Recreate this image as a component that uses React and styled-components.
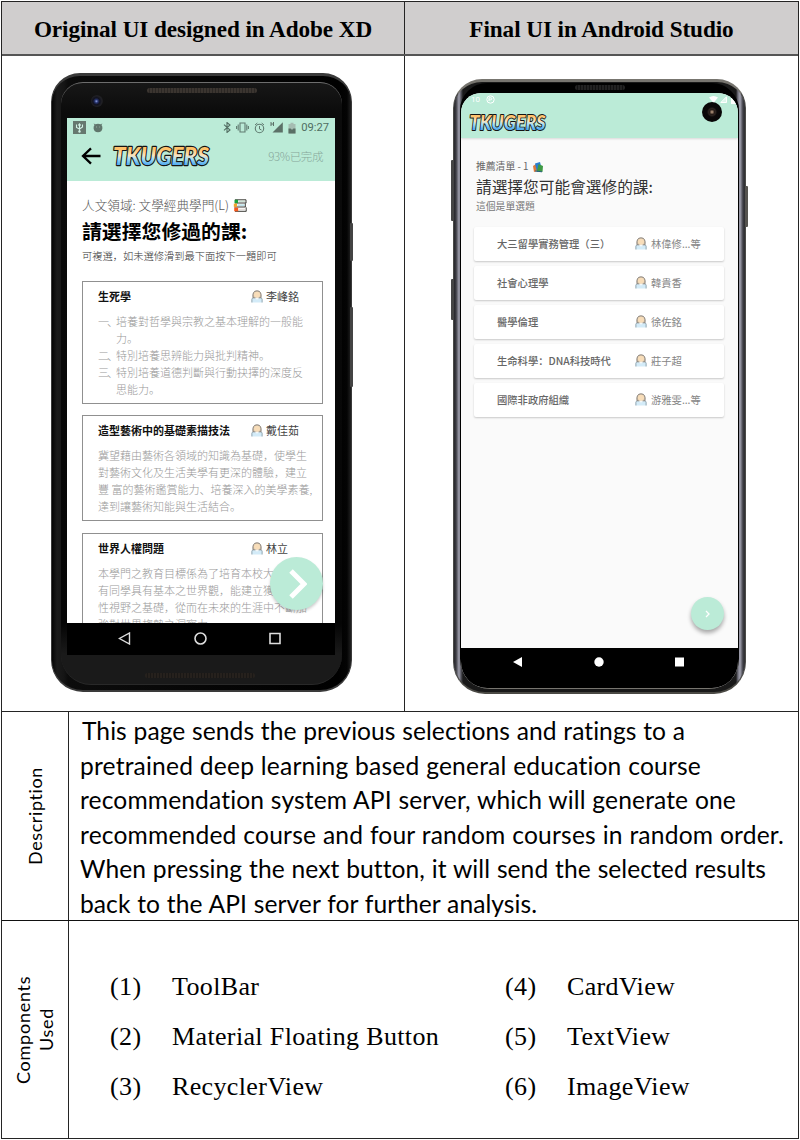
import React from "react";
import styled, { createGlobalStyle } from "styled-components";

const Global = createGlobalStyle`
  * { box-sizing: border-box; }
  html, body { margin: 0; background: #fff; }
  body { width: 800px; height: 1140px; overflow: hidden; }
`;
const cjk = `"Noto Sans CJK SC", "Noto Sans", sans-serif`;
const serif = `"Liberation Serif", serif`;
const line = "#242424";

const Page = styled.main`
  width: 798px; height: 1138px; margin: 1px; 
  display: grid; grid-template-rows: 54px 656px 208px 1fr;
  border: 1px solid ${line};
  color: #000; background: #fff;
`;
const HeaderRow = styled.header`
  display: grid; grid-template-columns: 402px 1fr;
  border-bottom: 2px solid #555; background: #d0cece;
`;
const HeaderCell = styled.h2`
  margin: 0; display: flex; justify-content: center; align-items: center;
  padding: 3px 0 0;
  font: bold 23.2px ${serif}; white-space: nowrap;
  letter-spacing: -0.08px;
  & + & { border-left: 1px solid ${line}; }
`;
const ShotRow = styled.section`
  display: grid; grid-template-columns: 402px 1fr;
  border-bottom: 1px solid ${line};
`;
const ShotCell = styled.div`
  padding: ${(p) => p.$pad};
  & + & { border-left: 1px solid ${line}; }
`;
const InfoRow = styled.section`
  display: grid; grid-template-columns: 66px 1fr;
  & + & { border-top: 1px solid #111; }
`;
const SideLabel = styled.div`
  display: flex; align-items: center; justify-content: center;
  writing-mode: vertical-rl; transform: rotate(180deg);
  font: 18px/23px Lato, sans-serif; text-align: center;
  font-variant-ligatures: none;
  letter-spacing: ${(p) => p.$ls}px;
`;
const InfoBody = styled.div`
  border-left: 1px solid ${line};
  padding: ${(p) => p.$pad};
`;
const Paragraph = styled.p`
  margin: 0; font: 24.6px/34.5px Lato, sans-serif; font-variant-ligatures: none;
`;
const Line = styled.span`
  display: block; width: ${(p) => p.$w}px; white-space: nowrap;
  margin-left: ${(p) => p.$ml || 0}px; letter-spacing: ${(p) => p.$ls || 0}px;
  text-align: justify; text-align-last: justify;
`;
const PartGrid = styled.ol`
  list-style: none; margin: 0; padding: 0;
  display: grid; grid-template-columns: 395px 1fr; grid-auto-flow: column;
  grid-template-rows: repeat(3, 50px);
  font: 26px/50px ${serif}; white-space: nowrap; letter-spacing: 0.36px;
`;
const Part = styled.li`
  display: grid; grid-template-columns: 62px 1fr;
`;

/* Left phone */
const Pixel = styled.div`
  position: relative; width: 301px; height: 619px; padding: 42px 16px 0 15px;
  border-radius: 29px 29px 32px 32px; border: solid #3a3a3a; border-width: 3px 1px 2px;
  background: linear-gradient(90deg, #050505 0, #1b1b1b 5px, #151515 12px, #0c0c0c 16px, #000 286px, #040404 295px, #292929 300px);
`;
const Bezel = styled.div`
  position: absolute; inset: 6px 9px 5px 9px; border-radius: 22px 22px 30px 30px;
  border-top: 1px solid #6d6d6d; border-bottom: 1px solid #292929;
  background: linear-gradient(#171717, #0b0b0b 30px, #050505 90%, #1a1a1a 95%);
`;
const Grille = styled.div`
  position: absolute; left: ${(p) => p.$x}px; top: ${(p) => p.$y}px;
  width: ${(p) => p.$w}px; height: 5px; border-radius: 3px;
  background: repeating-linear-gradient(90deg, ${(p) => p.$c} 0 2px, ${(p) => p.$gap || "#2b2724"} 2px 3px);
`;
const Camera = styled.div`
  position: absolute; left: 39px; top: 19px; width: 12px; height: 12px; border-radius: 50%;
  background: radial-gradient(circle at 45% 52%, #8fa0e0 0, #27346f 18%, #10111e 38%, #202024 60%, #111 100%);
`;
const Key = styled.i`
  position: absolute; left: ${(p) => p.$x}px; top: ${(p) => p.$y}px;
  width: ${(p) => p.$w || 3}px; height: ${(p) => p.$h}px; background: ${(p) => p.$c || "#444"}; border-radius: 1px;
`;
const PixelScreen = styled.div`
  position: relative; height: 537px; width: 268px; display: flex; flex-direction: column;
  background: #fff; overflow: hidden; font-family: ${cjk};
`;
const PixelTop = styled.div`
  height: 63px; flex: none; background: #bbebd7; display: flex; flex-direction: column;
`;
const StatusBar = styled.div`
  height: 18px; display: flex; align-items: center; justify-content: space-between; padding: 1px 6px 0 6px;
  font: 400 11.2px Roboto, sans-serif; color: #4f6d61;
`;
const StatusIcons = styled.span`
  display: flex; align-items: center; gap: ${(p) => p.$gap || 6}px;
  svg { display: block; }
`;
const AppBar = styled.div`
  flex: 1; display: flex; align-items: center; padding: 0 12px 5px 14px;
  svg { display: block; }
`;
const AppLogo = styled.div`
  margin: -8px 0 -8px 9px;
`;
const Progress = styled.span`
  margin-left: auto; font-weight: 300; font-size: 11.5px; color: #86a79a; letter-spacing: -0.4px; white-space: nowrap;
`;
const PixelContent = styled.div`
  flex: 1; min-height: 0; overflow: hidden; padding: 15px 12px 0 15px;
`;
const Topic = styled.div`
  display: flex; align-items: center; gap: 4px; white-space: nowrap;
  height: ${(p) => p.$h}px; font-size: ${(p) => p.$s}px; font-weight: ${(p) => p.$b || 300}; color: ${(p) => p.$c};
  line-height: ${(p) => p.$h}px;
`;
const Question = styled.div`
  height: ${(p) => p.$h}px; line-height: ${(p) => p.$h}px; font-size: ${(p) => p.$s}px;
  font-weight: ${(p) => p.$b}; color: ${(p) => p.$c || "#000"}; white-space: nowrap;
`;
const Hint = styled.div`
  height: ${(p) => p.$h}px; line-height: 17px; font-size: ${(p) => p.$s}px;
  font-weight: ${(p) => p.$b || 300}; color: ${(p) => p.$c || "#333"}; white-space: nowrap;
`;
const Course = styled.article`
  width: 241px; height: ${(p) => p.$h}px; border: 1px solid #909090; padding: 4px 0 0 15px;
  margin-bottom: ${(p) => p.$gap || 11}px; font-size: 11px; color: #000;
`;
const CourseHead = styled.div`
  display: grid; grid-template-columns: 153px 15px 1fr; align-items: center; height: 21px; line-height: 21px;
  font-weight: 400; white-space: nowrap; color: #444;
  b { font-weight: 700; color: #111; }
`;
const CourseText = styled.div`
  margin-top: 6px; font-size: 11px; line-height: 17px; font-weight: 300; color: #999; white-space: nowrap;
`;
const Numbered = styled.div`
  display: grid; grid-template-columns: 18px 1fr;
`;
const Marker = styled.span`
  letter-spacing: -2.1px;
`;
const Fab = styled.button`
  position: absolute; right: ${(p) => p.$r}px; bottom: ${(p) => p.$b}px;
  width: ${(p) => p.$s}px; height: ${(p) => p.$s}px; border-radius: 50%; border: 0; padding: 0;
  background: #bbebd7; box-shadow: ${(p) => p.$shadow};
  display: flex; align-items: center; justify-content: center;
`;
const PixelNav = styled.nav`
  height: 32px; flex: none; background: #000; display: flex; justify-content: space-between; align-items: center;
  padding: 0 54px 1px 51px;
`;

/* Right phone */
const Galaxy = styled.div`
  position: relative; width: 293px; height: 615px; padding: 11px 7px 0 7px;
  border-radius: 29px 29px 32px 32px; border: 1px solid #4a4a48; border-top: 3px solid #77756f; border-bottom: 2px solid #4a4944;
  background: linear-gradient(90deg, #26262b 0, #3c3c42 2px, #a1a1b0 5px, #54545c 7px, #191919 9px, #191919 282px, #72727e 284px, #a4a4b2 286px, #3d3d44 289px, #252525 292px);
`;
const GalaxyFace = styled.div`
  position: absolute; inset: 1px 6px 3px 6px; background: #000; border-radius: 27px 27px 30px 30px;
  border-bottom: 1px solid #77756f;
`;
const GalaxyScreen = styled.div`
  position: relative; width: 277px; height: 595px; display: flex; flex-direction: column;
  border-radius: 20px 20px 26px 26px; overflow: hidden; background: #fafafa; font-family: ${cjk};
`;
const GalaxyTop = styled.div`
  flex: none; height: 45px; background: #bbebd7; display: flex; flex-direction: column; box-shadow: 0 1px 2px #0002;
  svg { display: block; }
`;
const GalaxyStatus = styled.div`
  height: 13px; display: flex; align-items: center; justify-content: space-between; padding: 0 0 0 10px;
  color: #fff; font: 8px Roboto, sans-serif;
`;
const LogoSlot = styled.div`
  padding: 0 0 0 7px;
`;
const PunchHole = styled.div`
  position: absolute; top: 9px; right: 16px; width: 20px; height: 20px; border-radius: 50%;
  background: radial-gradient(circle, #9b806a 0 5%, #261b17 18%, #2b221e 25%, #0b0808 36%, #050505 100%);
`;
const GalaxyContent = styled.div`
  flex: 1; min-height: 0; padding: 20px 14px 0 13px;
`;
const Intro = styled.div`
  padding-left: 2px;
`;
const CardList = styled.div`
  display: flex; flex-direction: column; gap: 5px; margin-top: 12px;
`;
const ChoiceCard = styled.div`
  display: grid; grid-template-columns: 138px 16px 1fr; align-items: center; height: 34px; padding: 0 0 1px 23px;
  background: #fff; border-radius: 2px; box-shadow: 0 1px 2px #0003;
  font-size: 10.3px; color: #858585; white-space: nowrap;
  b { font-weight: 500; color: #666; }
`;
const GalaxyNav = styled.nav`
  height: 40px; background: #000; display: flex; align-items: flex-start; justify-content: space-between; padding: 9px 54px 0 52px;
`;

function Logo({ w, h, id }) {
  return (
    <svg width={w} height={h} viewBox="0 0 100 36" preserveAspectRatio="none">
      <defs>
        <linearGradient id={id} x1="0" y1="0" x2="0" y2="1">
          <stop offset=".3" stopColor="#ffc26b" /><stop offset=".5" stopColor="#fbe3bd" />
          <stop offset=".62" stopColor="#a8def5" /><stop offset=".8" stopColor="#58aef0" />
        </linearGradient>
      </defs>
      <text x="2" y="26.5" textLength="95" lengthAdjust="spacingAndGlyphs" fontFamily="Lato, sans-serif" fontStyle="italic"
        fontWeight="900" fontSize="24" fill={`url(#${id})`} stroke="#141414" strokeWidth="2.2" strokeLinejoin="round" paintOrder="stroke">TKUGERS</text>
    </svg>
  );
}
const Person = () => (
  <svg width="12" height="13" viewBox="0 0 12 13">
    <path d="M1.2 12.5V9.3Q1.4 7.6 3.6 7.3H8.4Q10.6 7.6 10.8 9.3V12.5Z" fill="#d3ebf8" />
    <path d="M.9 12.5V9.3Q1 8.2 2.3 7.6M11.1 12.5V9.3Q11 8.2 9.7 7.6" stroke="#7d97a5" strokeWidth=".9" fill="none" />
    <path d="M2 7.8Q1 .8 6 .8Q11 .8 10 7.8Z" fill="#cfc1ab" stroke="#847c74" strokeWidth=".9" />
    <circle cx="6" cy="4.8" r="3.1" fill="#f8ddb9" />
    <path d="M3.5 7.8H8.5L6 9.8Z" fill="#f3f7f8" />
  </svg>
);
const Books = () => (
  <svg width="14" height="13" viewBox="0 0 14 13">
    <path d="M2 .8H13M2 4H13.2M1.3 8H12.5M2 12.3H13.3M13 .8V4M12.3 4.3V8M13.2 8.4V12.3" fill="none" stroke="#3b3b36" strokeWidth="1" />
    <path d="M1.5.8H5v3.4H1.5z" fill="#1ba13e" /><path d="M.8 4.6H4v3.2H.8z" fill="#f2a52b" /><path d="M1.2 8.6H5.2v3.7h-4z" fill="#f65a1e" />
    <path d="M5.5 2.2h6.5" stroke="#b9d6c2" /><path d="M4.5 6.1h7" stroke="#8ecbd8" /><path d="M6 10.3h6.5" stroke="#ded8d2" />
  </svg>
);
const ColorBooks = () => (
  <svg width="12" height="12" viewBox="0 0 12 12">
    <path d="M1 5L4 3L6 10L2 11Z" fill="#e07a3c" /><path d="M3 2.5L8 1L10 9L5 11Z" fill="#2a7fd0" />
    <path d="M6.5 3L11 5L10.5 11L5 10Z" fill="#3f9a45" /><path d="M3 10L10 10.8" stroke="#255e77" />
  </svg>
);
const Back = () => (
  <svg width="21" height="18" viewBox="0 0 21 18"><path d="M19.5 9H2M10 1.4L2 9L10 16.6" fill="none" stroke="#000" strokeWidth="2.3" /></svg>
);
const LeftIcons = () => (
  <>
    <svg width="13" height="13" viewBox="0 0 13 13"><path fill="#66786f" d="M0 0h13v13H0z" /><path d="M6.5 10V4M3.5 3.5v3l3 1.5 3-2V3.5M5.2 4.5L6.5 2.8l1.3 1.7" fill="none" stroke="#d1f1e5" strokeWidth="1.1" /><circle cx="6.5" cy="10.5" r="1.2" fill="#d1f1e5" /></svg>
    <svg width="10" height="10" viewBox="0 0 10 10"><path d="M1.5 2L.6.4l1.8.9Q5 .2 7.6 1.3L9.4.4 8.5 2Q9.6 3 9.4 5.5 9 9 5 9.2 1 9 .6 5.5.4 3 1.5 2Z" fill="#60766c" /><path d="M3 4h.8M6.3 4h.8" stroke="#a0baae" /></svg>
  </>
);
const RightIcons = () => (
  <>
    <svg width="8" height="11" viewBox="0 0 8 11"><path d="M1 2.7L7 8 4 10.5V.5L7 3 1 8.3" fill="none" stroke="#526d62" strokeWidth="1.1" /></svg>
    <svg width="13" height="11" viewBox="0 0 13 11"><path d="M4 1h5v9H4zM2.2 2.5v6M10.8 2.5v6M.6 4v3M12.4 4v3" fill="none" stroke="#607b70" strokeWidth="1.1" /></svg>
    <svg width="11" height="12" viewBox="0 0 11 12"><circle cx="5.5" cy="6.5" r="4.2" fill="none" stroke="#607b70" strokeWidth="1.1" /><path d="M1 3L3.3 1M10 3L7.7 1M5.5 4v3l2 1" fill="none" stroke="#607b70" /></svg>
    <svg width="13" height="11" viewBox="0 0 13 11"><path d="M2.5 10.5H12.8V.3Z" fill="#5c7168" /><path d="M1 0v4M3.5 0v4M1 2h2.5" stroke="#5c7168" /></svg>
    <svg width="8" height="12" viewBox="0 0 8 12"><path d="M.5 2H2.5V.7h3V2h2v9.5h-7z" fill="#a5bdb2" /><path d="M.5 6.5h7v5h-7z" fill="#596f65" /><path d="M2.5 6l1.5 2 1.5-2" fill="#a5bdb2" /></svg>
  </>
);

function Head({ title, name }) {
  return <CourseHead><b>{title}</b><Person /><span>{name}</span></CourseHead>;
}

function LeftPhone() {
  return (
    <Pixel>
      <Key $x={298} $y={147} $h={38} /><Key $x={298} $y={231} $h={80} />
      <Bezel /><Grille $x={95} $y={12} $w={110} $c="#3b3530" /><Camera />
      <Grille $x={93} $y={597} $w={110} $c="#26211d" $gap="#1a1816" />
      <PixelScreen>
        <PixelTop>
          <StatusBar>
            <StatusIcons $gap={7}><LeftIcons /></StatusIcons>
            <StatusIcons $gap={5}><RightIcons /><span>09:27</span></StatusIcons>
          </StatusBar>
          <AppBar><Back /><AppLogo><Logo w={101} h={38} id="logoA" /></AppLogo><Progress>93%已完成</Progress></AppBar>
        </PixelTop>
        <PixelContent>
          <Topic $h={18} $s={12.65} $c="#555"><span>人文領域: 文學經典學門(L)</span><Books /></Topic>
          <Question $h={33} $s={19.85} $b={700}>請選擇您修過的課:</Question>
          <Hint $h={34} $s={10.25}>可複選，如未選修滑到最下面按下一題即可</Hint>
          <Course $h={123}>
            <Head title="生死學" name="李峰銘" />
            <CourseText>
              <Numbered><Marker>一、</Marker><span>培養對哲學與宗教之基本理解的一般能<br />力。</span></Numbered>
              <Numbered><Marker>二、</Marker><span>特別培養思辨能力與批判精神。</span></Numbered>
              <Numbered><Marker>三、</Marker><span>特別培養道德判斷與行動抉擇的深度反<br />思能力。</span></Numbered>
            </CourseText>
          </Course>
          <Course $h={106} $gap={12}>
            <Head title="造型藝術中的基礎素描技法" name="戴佳茹" />
            <CourseText>冀望藉由藝術各領域的知識為基礎，使學生<br />對藝術文化及生活美學有更深的體驗，建立<br />豐 富的藝術鑑賞能力、培養深入的美學素養,<br />達到讓藝術知能與生活結合。</CourseText>
          </Course>
          <Course $h={123}>
            <Head title="世界人權問題" name="林立" />
            <CourseText>本學門之教育目標係為了培育本校大學所<br />有同學具有基本之世界觀，能建立獲得全<br />性視野之基礎，從而在未來的生涯中不斷加<br />強對世界趨勢之洞察力</CourseText>
          </Course>
        </PixelContent>
        <PixelNav>
          <svg width="13" height="13" viewBox="0 0 13 13"><path d="M11.5 1v11L1.5 6.5Z" fill="none" stroke="#ddd" strokeWidth="1.4" /></svg>
          <svg width="13" height="13" viewBox="0 0 13 13"><circle cx="6.5" cy="6.5" r="5.5" fill="none" stroke="#ddd" strokeWidth="1.6" /></svg>
          <svg width="12" height="13" viewBox="0 0 12 13"><path d="M1 1.5h10v10H1z" fill="none" stroke="#ddd" strokeWidth="1.6" /></svg>
        </PixelNav>
        <Fab $r={12} $b={45} $s={53} $shadow="0 2px 3px #0003">
          <svg width="20" height="30" viewBox="0 0 20 30"><path d="M4 2L17 15L4 28" fill="none" stroke="#fff" strokeWidth="5" /></svg>
        </Fab>
      </PixelScreen>
    </Pixel>
  );
}

const choices = [
  ["大三留學實務管理（三）", "林偉修...等"], ["社會心理學", "韓貴香"], ["醫學倫理", "徐佐銘"],
  ["生命科學：DNA科技時代", "莊子超"], ["國際非政府組織", "游雅雯...等"],
];
function RightPhone() {
  return (
    <Galaxy>
      <Key $x={-3} $y={78} $h={61} /><Key $x={-3} $y={197} $h={41} />
      <Key $x={291} $y={104} $h={41} $c="#55534f" />
      <GalaxyFace /><Grille $x={121} $y={3} $w={50} $c="#222" $gap="#111" />
      <GalaxyScreen>
        <GalaxyTop>
          <GalaxyStatus>
            <StatusIcons><span>10</span><svg width="9" height="9" viewBox="0 0 9 9"><circle cx="4.5" cy="4.5" r="3.7" fill="none" stroke="#fff" /><path d="M3 6V2.8h1.8a1 1 0 010 2H3" fill="none" stroke="#fff" /></svg></StatusIcons>
            <StatusIcons $gap={2}>
              <svg width="9" height="7" viewBox="0 0 9 7"><path d="M0 1.5Q4.5-1.5 9 1.5L4.5 7Z" fill="#fff" /></svg>
              <svg width="7" height="7" viewBox="0 0 7 7"><path d="M.8 6.5H6.5V.8Z" fill="#dff7ed" stroke="#fff" /></svg>
              <svg width="9" height="8" viewBox="0 0 9 8"><path d="M2 1h5v7H2z" fill="#fff" /></svg>
            </StatusIcons>
          </GalaxyStatus>
          <LogoSlot><Logo w={80} h={32} id="logoB" /></LogoSlot>
          <PunchHole />
        </GalaxyTop>
        <GalaxyContent>
          <Intro>
            <Topic $h={17} $s={9.8} $c="#666" $b={400}><span>推薦清單 - 1</span><ColorBooks /></Topic>
            <Question $h={23} $s={15.7} $b={400} $c="#333">請選擇您可能會選修的課:</Question>
            <Hint $h={17} $s={9.8} $c="#777" $b={400}>這個是單選題</Hint>
          </Intro>
          <CardList>
            {choices.map(([title, name]) => <ChoiceCard key={title}><b>{title}</b><Person /><span>{name}</span></ChoiceCard>)}
          </CardList>
        </GalaxyContent>
        <GalaxyNav>
          <svg width="9" height="10" viewBox="0 0 9 10"><path d="M9 0v10L0 5Z" fill="#fff" /></svg>
          <svg width="10" height="10" viewBox="0 0 10 10"><circle cx="5" cy="5" r="4.7" fill="#fff" /></svg>
          <svg width="9" height="10" viewBox="0 0 9 10"><path d="M0 .5h9v9H0z" fill="#fff" /></svg>
        </GalaxyNav>
        <Fab $r={14} $b={58} $s={33} $shadow="0 3px 4px #0005">
          <svg width="5" height="8" viewBox="0 0 5 8"><path d="M1 1l3 3-3 3" fill="none" stroke="#fff" strokeWidth="1.3" /></svg>
        </Fab>
      </GalaxyScreen>
    </Galaxy>
  );
}

export default function App() {
  return (
    <>
      <Global />
      <Page>
        <HeaderRow>
          <HeaderCell>Original UI designed in Adobe XD</HeaderCell>
          <HeaderCell>Final UI in Android Studio</HeaderCell>
        </HeaderRow>
        <ShotRow>
          <ShotCell $pad="17px 0 0 49px"><LeftPhone /></ShotCell>
          <ShotCell $pad="23px 0 0 48px"><RightPhone /></ShotCell>
        </ShotRow>
        <InfoRow>
          <SideLabel $ls={0.6}>Description</SideLabel>
          <InfoBody $pad="2px 0 0 11px">
            <Paragraph>
              <Line $w={603} $ml={2} $ls={0.05}>This page sends the previous selections and ratings to a</Line>
              <Line $w={621} $ls={0.18}>pretrained deep learning based general education course</Line>
              <Line $w={656} $ls={0.13}>recommendation system API server, which will generate one</Line>
              <Line $w={704} $ls={0.18}>recommended course and four random courses in random order.</Line>
              <Line $w={686} $ls={0.05}>When pressing the next button, it will send the selected results</Line>
              <Line $w={457} $ls={0.05}>back to the API server for further analysis.</Line>
            </Paragraph>
          </InfoBody>
        </InfoRow>
        <InfoRow>
          <SideLabel $ls={0.75}>Components<br />Used</SideLabel>
          <InfoBody $pad="41px 0 0 41px">
            <PartGrid>
              <Part><span>(1)</span><span>ToolBar</span></Part>
              <Part><span>(2)</span><span>Material Floating Button</span></Part>
              <Part><span>(3)</span><span>RecyclerView</span></Part>
              <Part><span>(4)</span><span>CardView</span></Part>
              <Part><span>(5)</span><span>TextView</span></Part>
              <Part><span>(6)</span><span>ImageView</span></Part>
            </PartGrid>
          </InfoBody>
        </InfoRow>
      </Page>
    </>
  );
}
